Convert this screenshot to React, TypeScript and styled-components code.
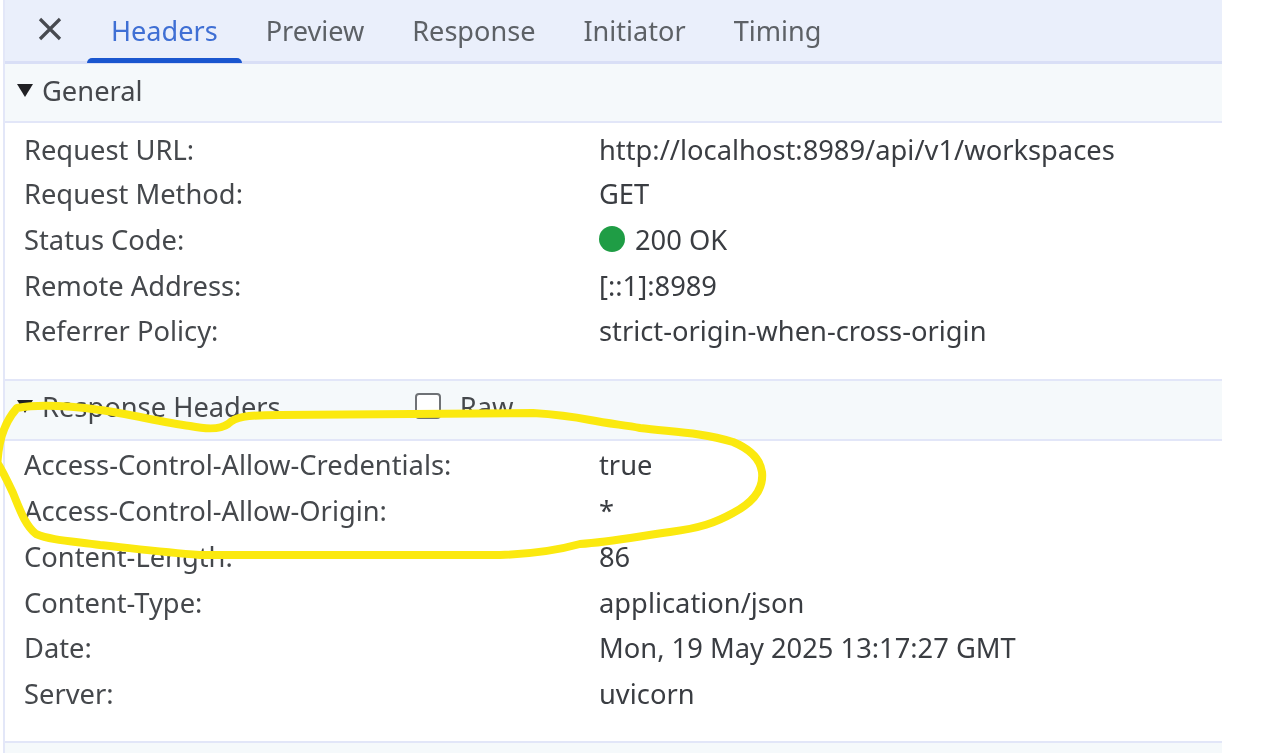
import React from "react";
import styled, { createGlobalStyle } from "styled-components";

const Global = createGlobalStyle`
  html, body { margin: 0; padding: 0; background: #fff; }
  body { font-family: "Noto Sans", "Open Sans", sans-serif; overflow: hidden; }
`;

const Stage = styled.div`
  position: relative;
  width: 1271px;
  height: 753px;
  overflow: hidden;
  background: #fff;
`;

const Panel = styled.div`
  width: 1217px;
  height: 753px;
  margin-left: 3px;
  border-left: 2px solid #e3e7f8;
  box-sizing: content-box;
  display: flex;
  flex-direction: column;
  filter: blur(0.4px);
`;

const TabBar = styled.div`
  flex: 0 0 auto;
  height: 64px;
  box-sizing: border-box;
  background: #eaeffb;
  border-bottom: 3px solid #d9dff6;
  display: flex;
  align-items: stretch;
  padding-left: 30px;
`;

const CloseButton = styled.div`
  width: 52px;
  display: flex;
  align-items: center;
  justify-content: flex-start;
  padding: 0 0 3px 2px;
  box-sizing: border-box;
  color: #474a50;
`;

const Tab = styled.div<{ $active?: boolean }>`
  position: relative;
  padding: 0 24px;
  display: flex;
  align-items: center;
  font-size: 27.1px;
  color: ${(p) => (p.$active ? "#3f6fd4" : "#5d6166")};
  &::after {
    content: "";
    display: ${(p) => (p.$active ? "block" : "none")};
    position: absolute;
    left: 0;
    right: 0;
    bottom: -2px;
    height: 5px;
    border-radius: 5px 5px 0 0;
    background: #1a56cf;
  }
`;

const SectionHeader = styled.div<{ $h: number; $lift: number }>`
  height: ${(p) => p.$h}px;
  box-sizing: border-box;
  background: #f5f9fb;
  border-bottom: 2px solid #e2e6f8;
  display: flex;
  align-items: center;
  padding: 0 0 ${(p) => p.$lift}px 12px;
  font-size: 27.3px;
  color: #45484c;
`;

const Arrow = styled.span`
  width: 0;
  height: 0;
  border-left: 8px solid transparent;
  border-right: 8px solid transparent;
  border-top: 13px solid #202124;
  margin-right: 9px;
`;

const RawBox = styled.span`
  width: 26px;
  height: 26px;
  box-sizing: border-box;
  border: 2px solid #6f7276;
  border-radius: 4px;
  background: #fff;
  margin-left: 134px;
  margin-right: 19px;
`;

const Rows = styled.div<{ $h: number; $top: number; $first: number }>`
  height: ${(p) => p.$h}px;
  box-sizing: border-box;
  padding-top: ${(p) => p.$top}px;
  border-bottom: 2px solid #e2e6f8;
  background: #fff;
  & > :first-child {
    height: ${(p) => p.$first}px;
  }
`;

const Row = styled.div`
  height: 45.75px;
  display: grid;
  grid-template-columns: 575px 1fr;
  align-items: center;
  padding-left: 19px;
  font-size: 27.3px;
  color: #45484c;
  white-space: nowrap;
`;

const Value = styled.span`
  color: #3a3d42;
  display: flex;
  align-items: center;
`;

const StatusDot = styled.span`
  width: 26px;
  height: 26px;
  border-radius: 50%;
  background: #1f9d45;
  margin-right: 10px;
`;

const Rest = styled.div`
  flex: 1;
  background: #f5f9fb;
`;

const Marker = styled.svg`
  position: absolute;
  left: 0;
  top: 0;
  pointer-events: none;
`;

const general: [string, React.ReactNode][] = [
  ["Request URL:", "http://localhost:8989/api/v1/workspaces"],
  ["Request Method:", "GET"],
  ["Status Code:", <><StatusDot />200 OK</>],
  ["Remote Address:", "[::1]:8989"],
  ["Referrer Policy:", "strict-origin-when-cross-origin"],
];

const response: [string, string][] = [
  ["Access-Control-Allow-Credentials:", "true"],
  ["Access-Control-Allow-Origin:", "*"],
  ["Content-Length:", "86"],
  ["Content-Type:", "application/json"],
  ["Date:", "Mon, 19 May 2025 13:17:27 GMT"],
  ["Server:", "uvicorn"],
];

const tabs = ["Headers", "Preview", "Response", "Initiator", "Timing"];

export default function App() {
  return (
    <Stage>
      <Global />
      <Panel>
        <TabBar>
          <CloseButton>
            <svg width="26" height="26" viewBox="0 0 26 26" fill="none">
              <path d="M3 3 L23 23 M23 3 L3 23" stroke="currentColor" strokeWidth="3.2" />
            </svg>
          </CloseButton>
          {tabs.map((t, i) => (
            <Tab key={t} $active={i === 0}>{t}</Tab>
          ))}
        </TabBar>
        <SectionHeader $h={59} $lift={4}><Arrow />General</SectionHeader>
        <Rows $h={258} $top={5} $first={42.75}>
          {general.map(([k, v]) => (
            <Row key={k}><span>{k}</span><Value>{v}</Value></Row>
          ))}
        </Rows>
        <SectionHeader $h={60} $lift={8}><Arrow />Response Headers<RawBox />Raw</SectionHeader>
        <Rows $h={302} $top={1} $first={45.75}>
          {response.map(([k, v]) => (
            <Row key={k}><span>{k}</span><Value>{v}</Value></Row>
          ))}
        </Rows>
        <Rest />
      </Panel>
      <Marker width="1271" height="753" viewBox="0 0 1271 753" fill="none">
        <path
          d="M-3 470 C-2 445 2 425 17 408 C40 404 70 406 100 410 C130 414 160 422 190 426 C205 429 220 430 228 424 C235 417 245 415 280 415 L533 413 C550 414 570 416 590 420 C610 424 625 425 640 428 C670 432 700 432 733 442 C750 449 760 458 762 472 C764 490 752 503 733 513 C715 523 700 528 670 532 C640 536 610 542 580 544 C555 551 530 554 500 555 L200 555 C160 552 130 548 100 545 C70 541 50 540 36 534 C25 525 20 510 13 493 C7 480 2 470 -3 462"
          stroke="#fbe90f"
          strokeWidth="8"
          strokeLinecap="round"
          strokeLinejoin="round"
        />
      </Marker>
    </Stage>
  );
}
